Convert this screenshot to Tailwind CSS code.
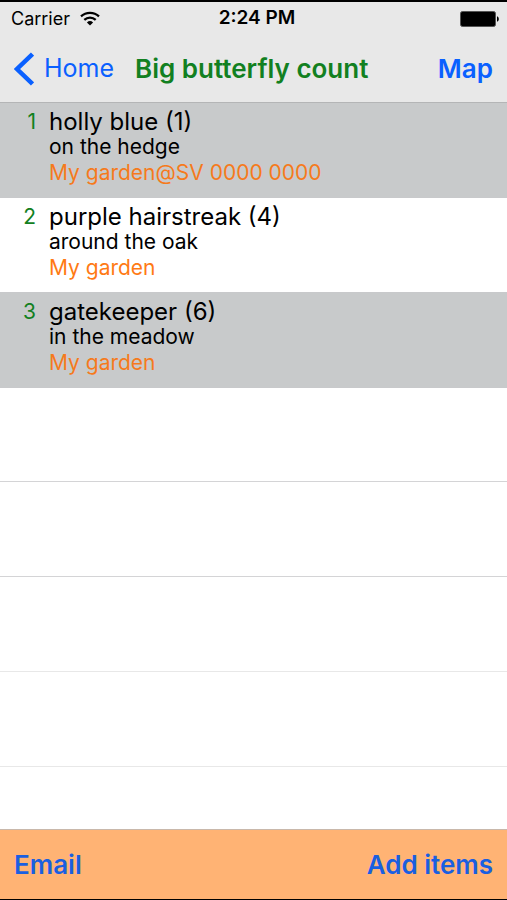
<!doctype html>
<html lang="en">
  <head>
    <meta charset="UTF-8" />
    <meta
      name="viewport"
      content="width=device-width, initial-scale=1.0" />
    <title>Big butterfly count</title>
    <script src="https://cdn.jsdelivr.net/npm/@tailwindcss/browser@4"></script>
  </head>
  <body class="flex h-screen flex-col overflow-hidden border-t-2 border-b border-black bg-white font-['Inter',sans-serif] text-black">
    <header class="shrink-0 border-b border-[#b4b5b6] bg-[#e8e8e8]">
      <!-- Status bar -->
      <div class="grid h-[33px] grid-cols-3 items-center pl-[11px] pr-2">
        <div class="flex items-center gap-[10px] text-[18px]">
          <span>Carrier</span>
          <svg class="h-[15px] w-5" viewBox="0 0 20 15" fill="none" stroke="black" stroke-width="2.2">
            <path d="M1 5.4a13 13 0 0 1 18 0" />
            <path d="M4.3 8.9a8.2 8.2 0 0 1 11.4 0" />
            <path d="M6.9 11.4a4.6 4.6 0 0 1 6.2 0L10 14.6z" fill="black" stroke="none" />
          </svg>
        </div>
        <div class="pl-1 text-center text-[19px] font-semibold">2:24 PM</div>
        <svg class="h-4 w-[39px] justify-self-end" viewBox="0 0 39 16">
          <rect x="0.5" y="0.5" width="35" height="15" rx="2" fill="black" stroke="#555" />
          <path d="M37 5.2c2.4.8 2.4 4.8 0 5.6z" fill="black" />
        </svg>
      </div>
      <!-- Navigation bar -->
      <nav class="flex h-[67px] items-center justify-between px-[14px]">
        <div class="flex items-center gap-[21px]">
          <a href="#" class="flex items-center gap-[10px] text-[25px] text-[#0a60ff]">
            <svg class="h-[34px] w-5" viewBox="0 0 20 34" fill="none" stroke="currentColor" stroke-width="4.5">
              <path d="M18.500 2L3 17l15.500 15" />
            </svg>
            Home
          </a>
          <h1 class="text-[26px] font-semibold text-[#128021]">Big butterfly count</h1>
        </div>
        <a href="#" class="text-[26px] font-semibold text-[#0a60ff]">Map</a>
      </nav>
    </header>

    <main class="min-h-0 flex-1 overflow-hidden">
      <ul>
        <li class="flex h-[95px] gap-[13px] border-b border-[#c8c9cb] bg-[#c8cacb] pl-[10px] pt-[7px]">
          <span class="w-[26px] text-right text-[21px] leading-6 text-[#128021]">1</span>
          <div>
            <h2 class="text-[24px] leading-6">holly blue (1)</h2>
            <p class="text-[21px] leading-[25px]">on the hedge</p>
            <p class="text-[21px] leading-7 text-[#f67a1c]">My garden@SV 0000 0000</p>
          </div>
        </li>
        <li class="flex h-[95px] gap-[13px] border-b border-[#c8c9cb] pl-[10px] pt-[7px]">
          <span class="w-[26px] text-right text-[21px] leading-6 text-[#128021]">2</span>
          <div>
            <h2 class="text-[24px] leading-6">purple hairstreak (4)</h2>
            <p class="text-[21px] leading-[25px]">around the oak</p>
            <p class="text-[21px] leading-7 text-[#ff7a14]">My garden</p>
          </div>
        </li>
        <li class="flex h-[95px] gap-[13px] border-b border-[#c8c9cb] bg-[#c8cacb] pl-[10px] pt-[7px]">
          <span class="w-[26px] text-right text-[21px] leading-6 text-[#128021]">3</span>
          <div>
            <h2 class="text-[24px] leading-6">gatekeeper (6)</h2>
            <p class="text-[21px] leading-[25px]">in the meadow</p>
            <p class="text-[21px] leading-7 text-[#f67a1c]">My garden</p>
          </div>
        </li>
        <!-- Empty rows -->
        <li class="h-[94px] border-b border-[#d4d4d6]"></li>
        <li class="h-[95px] border-b border-[#d4d4d6]"></li>
        <li class="h-[95px] border-b border-[#e8e8e8]"></li>
        <li class="h-[95px] border-b border-[#e8e8e8]"></li>
      </ul>
    </main>

    <footer class="flex h-[70px] shrink-0 items-center justify-between border-t border-[#c9b8ab] bg-[#ffb374] px-[14px]">
      <button type="button" class="text-[26px] font-semibold text-[#1a5fe0]">Email</button>
      <button type="button" class="text-[26px] font-semibold text-[#1a5fe0]">Add items</button>
    </footer>
  </body>
</html>
